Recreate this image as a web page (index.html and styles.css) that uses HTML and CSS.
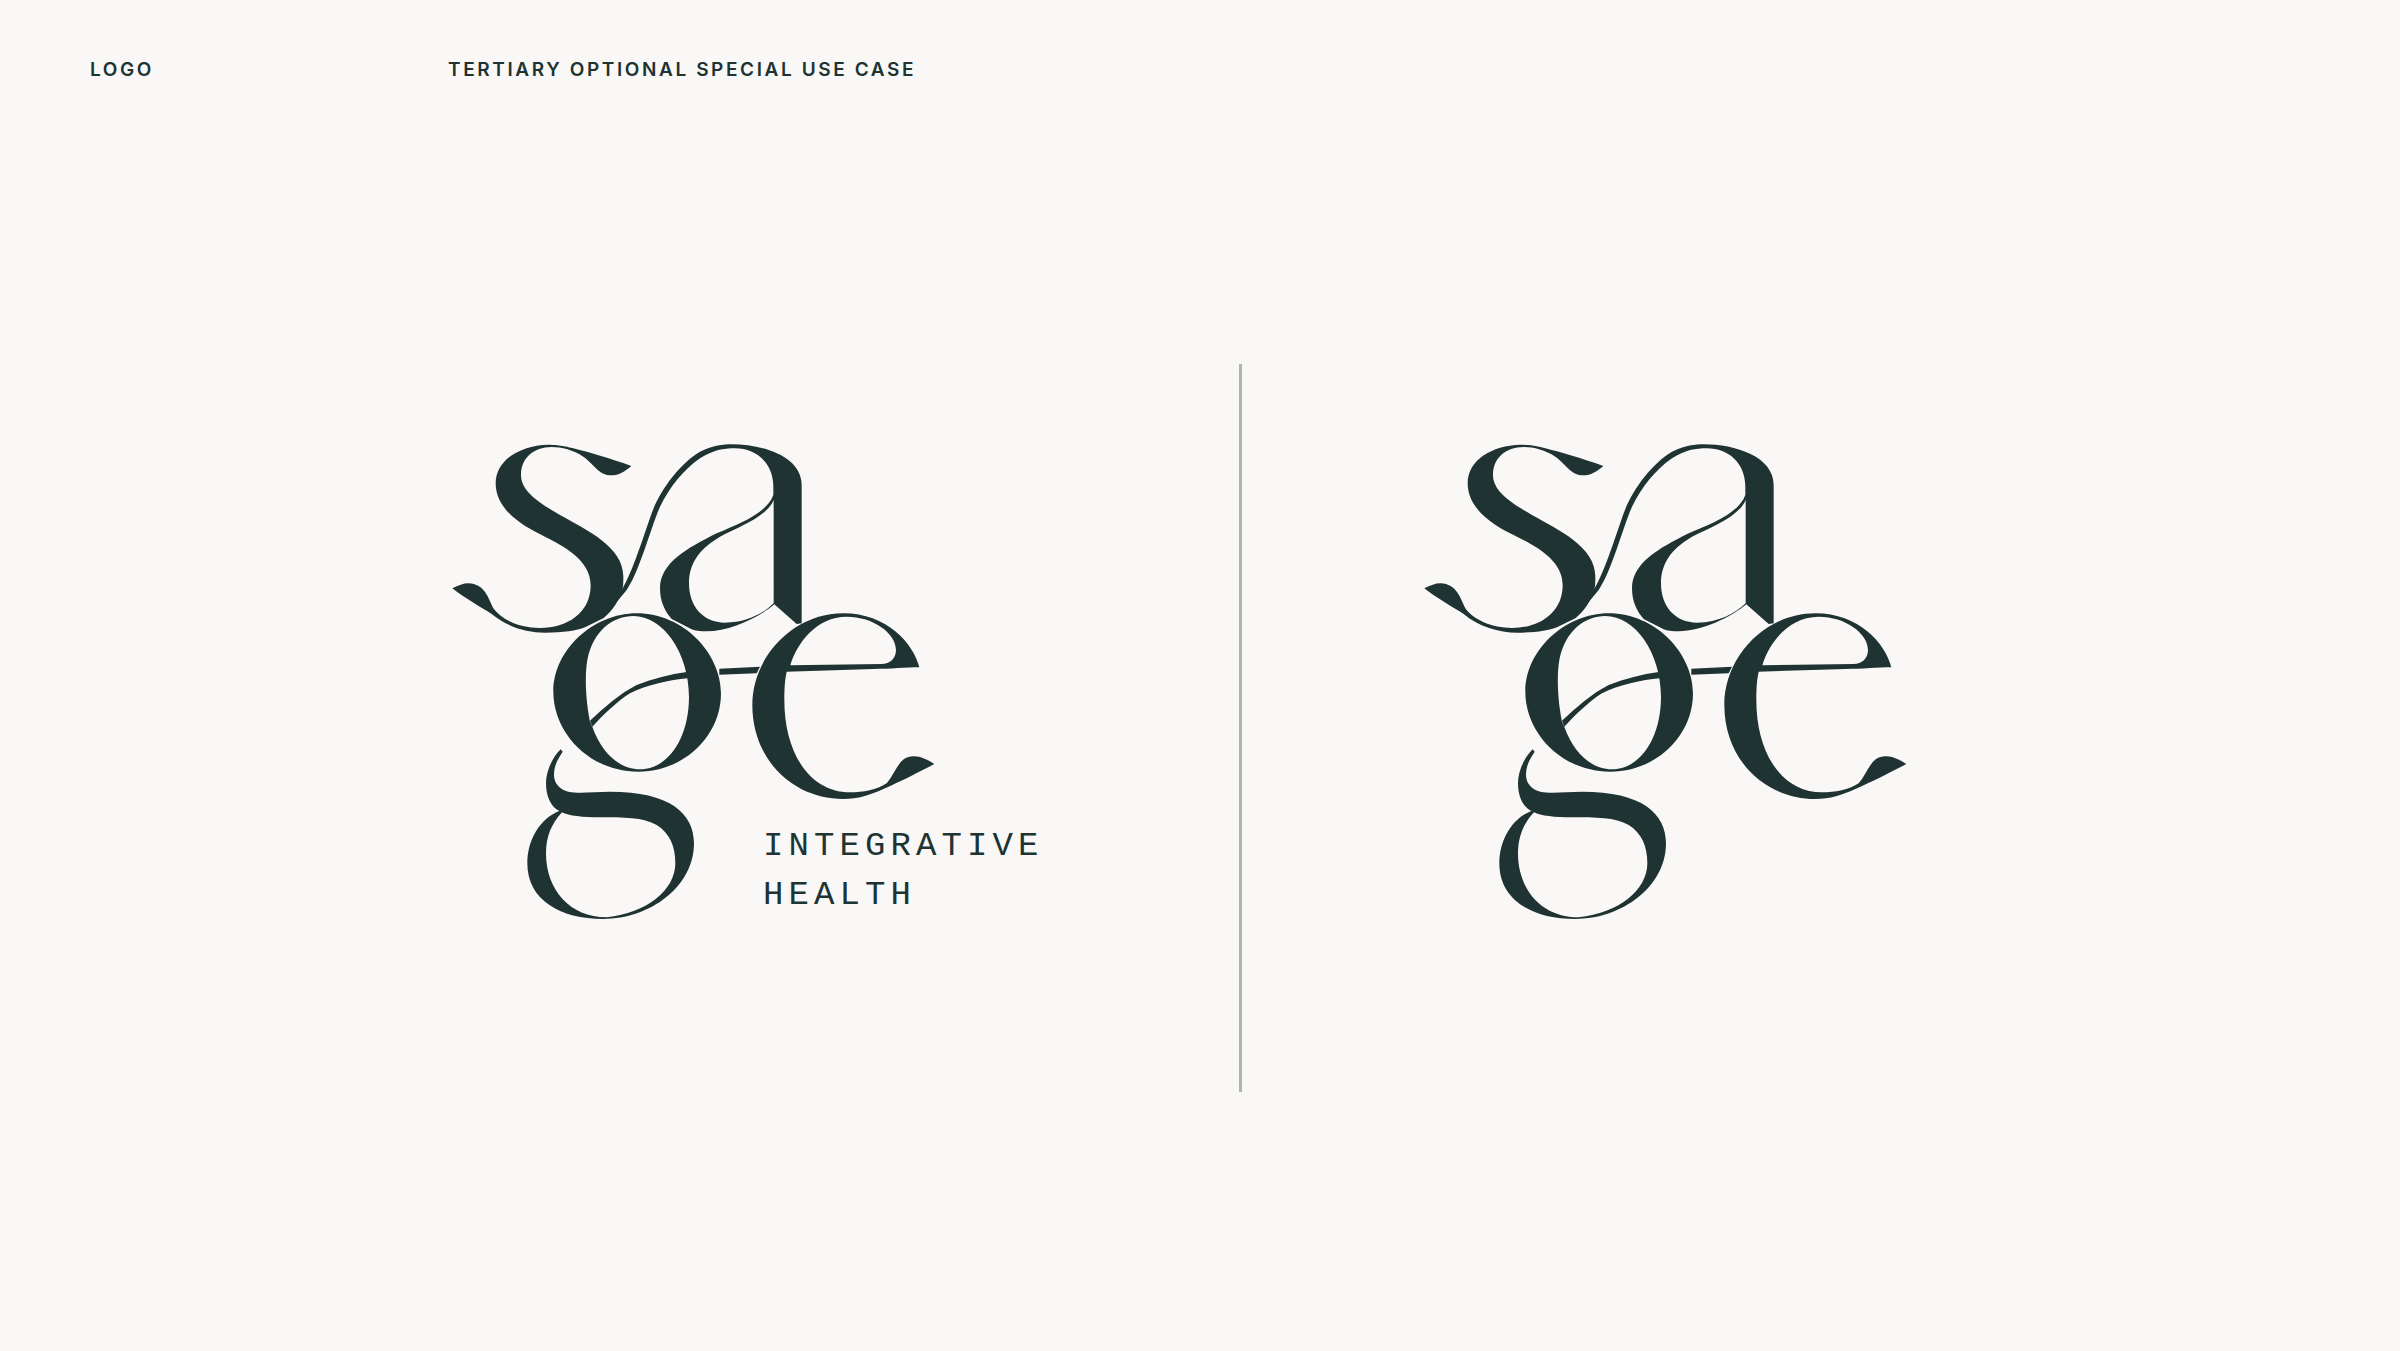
FILE: index.html
```html
<!DOCTYPE html>
<html lang="en">
<head>
    <meta charset="UTF-8">
    <meta name="viewport" content="width=device-width, initial-scale=1.0">
    <title>Sage Integrative Health - Logo</title>
    <link rel="stylesheet" href="styles.css">
</head>
<body>
    <svg class="defs" width="0" height="0" aria-hidden="true">
        <symbol id="sage" viewBox="440 430 500 500">
            <!-- s and a -->
            <g transform="translate(430 420) scale(.33333)">
                <path d="M604 138C540 115 470 95 430 85C400 76 370 74 355 74C270 76 197 120 197 190C197 270 280 320 345 350C400 378 482 420 482 495C482 580 410 624 330 624C270 624 215 600 190 565C175 535 165 492 115 490C100 490 85 496 67 505C105 535 150 560 185 582C230 620 290 638 345 638C400 638 440 632 465 622L520 595C545 575 570 540 578 505C580 495 580 480 580 470C580 380 470 330 390 285C330 250 273 215 273 165C273 115 310 81 365 81C395 81 430 90 460 110C490 130 505 166 545 166C565 166 585 155 604 138Z"/>
                <path fill-rule="evenodd" d="M578 505C610 450 640 350 665 280C690 210 750 130 810 95C850 76 880 73 905 73C1000 73 1115 110 1115 195L1115 610L1100 612L1033 553C990 590 900 634 830 634C810 634 795 632 785 628L725 597C705 575 690 545 690 505C690 430 770 385 860 340C930 310 1010 280 1030 225C1030 215 1030 205 1030 200C1030 130 980 85 915 85C880 85 850 90 810 115C760 150 720 200 690 260C660 330 630 450 590 510L520 595ZM1031 240L1031 550C1000 580 950 608 885 608C820 608 777 560 777 490C777 420 820 380 870 350C930 320 1010 290 1031 240Z"/>
            </g>
            <!-- g -->
            <g transform="translate(500 700) scale(.33333)">
                <path fill-rule="evenodd" d="M182 148C155 175 138 215 138 250C138 285 150 320 178 333C120 355 82 420 82 490C82 600 180 657 310 657C450 657 582 560 582 430C582 340 510 275 330 275C280 275 240 282 205 275C180 270 162 250 162 225C162 195 175 175 188 155ZM186 337C205 348 250 352 300 352C370 352 430 352 470 375C510 400 526 440 526 490C526 570 440 640 320 652C210 652 138 570 138 460C138 410 155 370 186 337Z"/>
            </g>
            <!-- o, the stem through it, and e -->
            <g transform="translate(530 590) scale(.33333)">
                <path fill-rule="evenodd" d="M320 70C460 70 573 190 573 310C573 440 460 545 325 545C180 545 70 430 70 305C70 180 190 70 320 70ZM310 78C250 78 190 120 172 210C165 250 165 320 180 395L187 410C215 490 270 538 330 538C410 538 477 450 477 320C477 190 400 78 310 78Z"/>
                <path d="M180 392C220 355 270 310 320 285C370 265 420 253 470 246L473 265C420 270 350 285 300 310C260 335 220 375 187 410Z"/>
                <path d="M568 236L690 230L680 250L568 254Z"/>
                <path fill-rule="evenodd" d="M940 70C790 70 667 200 667 345C667 510 790 627 940 627C985 627 1020 615 1060 597C1110 575 1170 545 1213 522C1190 508 1170 498 1150 499C1105 500 1100 545 1070 580C1040 600 1000 607 960 607C840 607 763 490 763 330C763 290 765 270 770 245L1030 237C1080 237 1130 232 1168 232C1150 160 1070 70 940 70ZM781 226C800 160 860 80 950 80C1030 80 1098 130 1098 180C1098 205 1080 222 1055 222Z"/>
            </g>
        </symbol>
    </svg>

    <header class="labels">
        <div class="label label-first">LOGO</div>
        <div class="label">TERTIARY OPTIONAL SPECIAL USE CASE</div>
    </header>

    <main class="board">
        <section class="panel panel-left">
            <div class="logo-wrap">
                <svg class="logo"><use href="#sage"/></svg>
                <div class="tagline">INTEGRATIVE<br>HEALTH</div>
            </div>
        </section>
        <div class="divider"></div>
        <section class="panel panel-right">
            <div class="logo-wrap">
                <svg class="logo"><use href="#sage"/></svg>
            </div>
        </section>
    </main>
</body>
</html>
```

FILE: styles.css
```css
body {
    margin: 0;
    height: 1351px;
    overflow: hidden;
    background-color: #f9f8f6;
    color: #203333;
    font-family: Inter, "Liberation Sans", sans-serif;
}
.defs {
    position: absolute;
}
.labels {
    display: flex;
    padding: 58px 0 0 90px;
}
.label {
    font-size: 19px;
    line-height: 23px;
    font-weight: 600;
    letter-spacing: 2.6px;
}
.label-first {
    width: 358px;
}
.board {
    display: grid;
    grid-template-columns: 1239px 3px 1fr;
    height: 728px;
    margin-top: 283px;
}
.panel {
    padding-top: 66px;
}
.panel-left {
    padding-left: 440px;
}
.panel-right {
    padding-left: 170px;
}
.divider {
    background-color: #aeb3b2;
}
.logo-wrap {
    position: relative;
    width: 500px;
    height: 500px;
}
.logo {
    display: block;
    width: 500px;
    height: 500px;
    fill: #203333;
}
.tagline {
    position: absolute;
    left: 323px;
    top: 392px;
    font-family: "Liberation Mono", monospace;
    font-size: 34px;
    line-height: 49px;
    letter-spacing: 5.1px;
    white-space: nowrap;
}
```
